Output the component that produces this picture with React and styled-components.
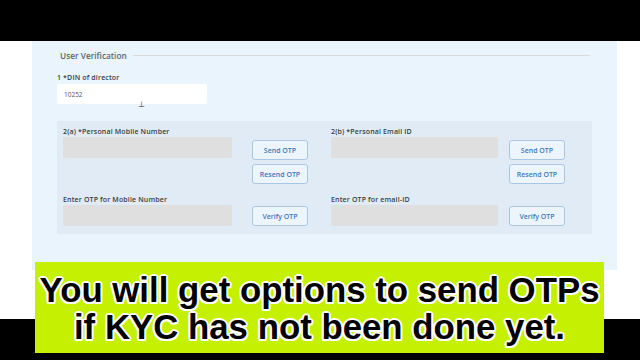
import React from "react";
import styled, { createGlobalStyle } from "styled-components";

const GlobalStyle = createGlobalStyle`
  * { box-sizing: border-box; }
  body {
    margin: 0;
    background: #000;
    font-family: "Open Sans", "Liberation Sans", sans-serif;
  }
`;

const Frame = styled.div`
  position: relative;
  width: 640px;
  height: 360px;
  background: #000;
  overflow: hidden;
`;

const Letterbox = styled.div`
  height: ${(p) => p.h}px;
  background: #000;
`;

const Page = styled.div`
  height: 278px;
  background: #fff;
  padding: 0 23px 0 32px;
`;

const Panel = styled.section`
  height: 229px;
  background: #eaf4fc;
  padding: 7px 25px 0 25px;
`;

const Heading = styled.div`
  display: flex;
  align-items: center;
  gap: 6px;
  padding-left: 3px;
  height: 14px;
  h2 {
    margin: 0;
    font-size: 8.3px;
    font-weight: 600;
    color: #5f646b;
    white-space: nowrap;
  }
  &::after {
    content: "";
    flex: 1;
    height: 1px;
    margin-right: 2px;
    background: #d8dadc;
  }
`;

const Label = styled.div`
  font-size: 7px;
  font-weight: 600;
  color: #3a3d42;
  line-height: 9px;
  letter-spacing: 0.15px;
  white-space: nowrap;
`;

const DinBlock = styled.div`
  margin-top: 11px;
  display: flex;
  flex-direction: column;
  gap: 2px;
`;

const DinInput = styled.div`
  position: relative;
  width: 150px;
  height: 20px;
  background: #fff;
  border-radius: 2px;
  font-size: 6.5px;
  color: #555;
  padding: 6px 7px;
`;

const Caret = styled.span`
  position: absolute;
  left: 81px;
  top: 16px;
  font-size: 8px;
  color: #333;
  line-height: 1;
`;

const Section = styled.div`
  margin-top: 17px;
  height: 113px;
  background: #e0ebf5;
  display: grid;
  grid-template-columns: 268px 1fr;
  padding: 6px 6px 0 6px;
`;

const Column = styled.div`
  display: flex;
  flex-direction: column;
`;

const Row = styled.div`
  display: flex;
  gap: ${(p) => p.gap}px;
  margin-top: 1px;
  margin-bottom: ${(p) => p.mb || 0}px;
`;

const Field = styled.div`
  width: ${(p) => p.w}px;
  height: 21px;
  background: #dfdfdf;
  border-radius: 2px;
`;

const Buttons = styled.div`
  display: flex;
  flex-direction: column;
  gap: 4px;
  margin-top: ${(p) => p.mt}px;
`;

const Button = styled.button`
  width: 56px;
  height: 20px;
  padding: 0;
  background: #edf5fc;
  border: 1px solid #a9c7e3;
  border-radius: 3px;
  color: #3d78b5;
  font-family: "Open Sans", "Liberation Sans", sans-serif;
  font-size: 7px;
  font-weight: 600;
`;

const Caption = styled.div`
  position: absolute;
  left: 35px;
  top: 262px;
  width: 569px;
  height: 91px;
  background: #c5f001;
  display: flex;
  flex-direction: column;
  align-items: center;
  justify-content: center;
  font-family: "Liberation Sans", Arial, sans-serif;
  font-weight: 700;
  font-size: 34.8px;
  line-height: 37px;
  color: #000;
  text-shadow:
    2px 0 0 #fff, -2px 0 0 #fff, 0 2px 0 #fff, 0 -2px 0 #fff,
    1.5px 1.5px 0 #fff, -1.5px -1.5px 0 #fff, 1.5px -1.5px 0 #fff, -1.5px 1.5px 0 #fff;
`;

function OtpColumn({ label, otpLabel, fieldWidth, gap }) {
  return (
    <Column>
      <Label>{label}</Label>
      <Row gap={gap} mb={11}>
        <Field w={fieldWidth} />
        <Buttons mt={3}>
          <Button>Send OTP</Button>
          <Button>Resend OTP</Button>
        </Buttons>
      </Row>
      <Label>{otpLabel}</Label>
      <Row gap={gap}>
        <Field w={fieldWidth} />
        <Buttons mt={1}>
          <Button>Verify OTP</Button>
        </Buttons>
      </Row>
    </Column>
  );
}

export default function App() {
  return (
    <Frame>
      <GlobalStyle />
      <Letterbox h={41} />
      <Page>
        <Panel>
          <Heading>
            <h2>User Verification</h2>
          </Heading>
          <DinBlock>
            <Label>1 *DIN of director</Label>
            <DinInput>
              10252
              <Caret>⊥</Caret>
            </DinInput>
          </DinBlock>
          <Section>
            <OtpColumn
              label="2(a) *Personal Mobile Number"
              otpLabel="Enter OTP for Mobile Number"
              fieldWidth={169}
              gap={20}
            />
            <OtpColumn
              label="2(b) *Personal Email ID"
              otpLabel="Enter OTP for email-ID"
              fieldWidth={167}
              gap={11}
            />
          </Section>
        </Panel>
      </Page>
      <Caption>
        <span>You will get options to send OTPs</span>
        <span>if KYC has not been done yet.</span>
      </Caption>
    </Frame>
  );
}
